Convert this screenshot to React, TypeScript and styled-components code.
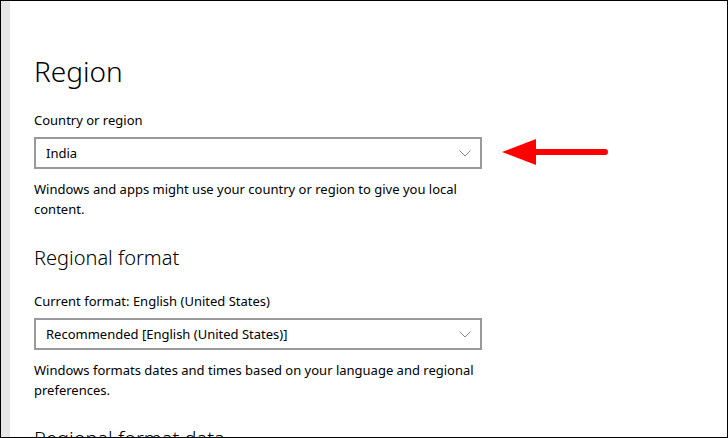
import { createGlobalStyle, styled } from "styled-components";

const GlobalStyle = createGlobalStyle`
  html, body {
    margin: 0;
    padding: 0;
    background: #fff;
    overflow: hidden;
  }
  body {
    font-family: "Noto Sans", "Open Sans", sans-serif;
    color: #000;
  }
`;

function Dropdown(props: { value: string }) {
  return (
    <SelectBox>
      <SelectValue>{props.value}</SelectValue>
      <Chevron width="12" height="7" viewBox="0 0 12 7">
        <path d="M0.5 0.5 L6 6 L11.5 0.5" fill="none" stroke="#888" strokeWidth="1" />
      </Chevron>
    </SelectBox>
  );
}

function Section(props: {
  title: string;
  big?: boolean;
  label: string;
  value: string;
  note: string;
}) {
  return (
    <SectionBlock>
      <SectionTitle big={props.big}>{props.title}</SectionTitle>
      <FieldLabel>{props.label}</FieldLabel>
      <Dropdown value={props.value} />
      <Note>{props.note}</Note>
    </SectionBlock>
  );
}

export default function App() {
  return (
    <>
      <GlobalStyle />
      <Frame>
        <SideStrip />
        <Content>
          <Section
            big
            title="Region"
            label="Country or region"
            value="India"
            note="Windows and apps might use your country or region to give you local content."
          />
          <Section
            title="Regional format"
            label="Current format: English (United States)"
            value="Recommended [English (United States)]"
            note="Windows formats dates and times based on your language and regional preferences."
          />
          <SectionTitle>Regional format data</SectionTitle>
          <Arrow width="108" height="30" viewBox="0 0 108 30">
            <polygon points="0,15 34,2 34,28" fill="#ff0000" />
            <line x1="30" y1="15" x2="103" y2="15" stroke="#ff0000" strokeWidth="6" strokeLinecap="round" />
          </Arrow>
        </Content>
      </Frame>
    </>
  );
}

const Frame = styled.div`
  width: 728px;
  height: 438px;
  box-sizing: border-box;
  border: 1px solid #000;
  display: flex;
  overflow: hidden;
`;

const SideStrip = styled.div`
  width: 9px;
  flex-shrink: 0;
  background-color: #e6e6e6;
`;

const Content = styled.div`
  position: relative;
  flex: 1;
  padding: 50px 0 0 24px;
`;

const SectionBlock = styled.div`
  display: flex;
  flex-direction: column;
  width: 448px;
  margin-bottom: 25px;
`;

const SectionTitle = styled.h1<{ big?: boolean }>`
  margin: 0 0 19px;
  font-weight: 300;
  font-size: ${(p) => (p.big ? "28px" : "20px")};
  line-height: ${(p) => (p.big ? "40px" : "28px")};
  color: #000;
`;

const FieldLabel = styled.div`
  font-size: 13px;
  line-height: 20px;
  margin-bottom: 7px;
`;

const SelectBox = styled.div`
  box-sizing: border-box;
  height: 32px;
  border: 2px solid #999;
  display: flex;
  align-items: center;
  justify-content: space-between;
  padding: 0 9px 0 10px;
`;

const SelectValue = styled.span`
  font-size: 13px;
`;

const Chevron = styled.svg`
  display: block;
`;

const Note = styled.div`
  margin-top: 10px;
  font-size: 13px;
  line-height: 20px;
`;

const Arrow = styled.svg`
  position: absolute;
  left: 492px;
  top: 136px;
`;
